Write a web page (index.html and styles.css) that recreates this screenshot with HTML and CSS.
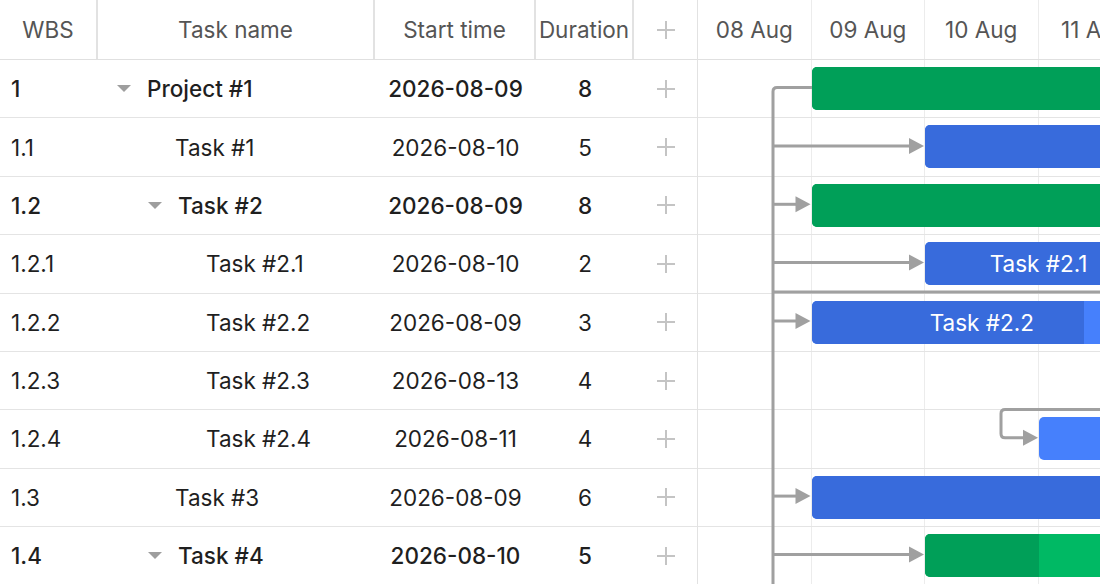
FILE: index.html
```html
<!DOCTYPE html>
<html lang="en">
<head>
<meta charset="utf-8"/>
<meta name="viewport" content="width=device-width, initial-scale=1.0"/>
<title>Gantt</title>
<link rel="stylesheet" href="styles.css">
</head>
<body>
  <div class="gantt">
    <div class="grid">
      <div class="head">
        <div class="cell c-wbs">WBS</div>
        <div class="cell c-name">Task name</div>
        <div class="cell c-start">Start time</div>
        <div class="cell c-dur">Duration</div>
        <div class="cell c-add">
          <svg class="plus" width="20" height="20" viewBox="0 0 20 20"><path d="M10 1v18M1 10h18"/></svg>
        </div>
      </div>
      <div id="gridBody"></div>
    </div>
    <div class="chart">
      <div class="scale" id="scale"></div>
      <div class="area" id="area">
        <svg class="links" width="900" height="600" viewBox="0 0 900 600">
          <g fill="none" stroke="#a0a0a0" stroke-width="3">
            <path d="M114 27.5H79Q75 27.5 75 31.5V600"/>
            <path d="M75 85.9H212"/>
            <path d="M75 144.3H98"/>
            <path d="M75 202.6H212"/>
            <path d="M75 261H98"/>
            <path d="M75 436.1H98"/>
            <path d="M75 494.5H212"/>
            <path d="M450 232H75"/>
            <path d="M450 349.5H307Q303 349.5 303 353.5V373.8Q303 377.8 307 377.8H326"/>
          </g>
          <g fill="#a0a0a0">
            <polygon points="211,77.9 226,85.9 211,93.9"/>
            <polygon points="97.5,136.3 112.5,144.3 97.5,152.3"/>
            <polygon points="211,194.6 226,202.6 211,210.6"/>
            <polygon points="97.5,253 112.5,261 97.5,269"/>
            <polygon points="325,369.8 340,377.8 325,385.8"/>
            <polygon points="97.5,428.1 112.5,436.1 97.5,444.1"/>
            <polygon points="211,486.5 226,494.5 211,502.5"/>
          </g>
        </svg>
      </div>
    </div>
  </div>
  <script>
    const dayWidth = 113.5;
    const days = ["08 Aug", "09 Aug", "10 Aug", "11 Aug", "12 Aug", "13 Aug", "14 Aug", "15 Aug", "16 Aug"];
    const tasks = [
      { wbs: "1", name: "Project #1", start: "2026-08-09", day: 1, dur: 8, level: 0, parent: true, progress: 45 },
      { wbs: "1.1", name: "Task #1", start: "2026-08-10", day: 2, dur: 5, level: 1, progress: 40 },
      { wbs: "1.2", name: "Task #2", start: "2026-08-09", day: 1, dur: 8, level: 1, parent: true, progress: 40 },
      { wbs: "1.2.1", name: "Task #2.1", start: "2026-08-10", day: 2, dur: 2, level: 2, progress: 85 },
      { wbs: "1.2.2", name: "Task #2.2", start: "2026-08-09", day: 1, dur: 3, level: 2, progress: 80 },
      { wbs: "1.2.3", name: "Task #2.3", start: "2026-08-13", day: 5, dur: 4, level: 2, progress: 30 },
      { wbs: "1.2.4", name: "Task #2.4", start: "2026-08-11", day: 3, dur: 4, level: 2, progress: 0 },
      { wbs: "1.3", name: "Task #3", start: "2026-08-09", day: 1, dur: 6, level: 1, progress: 50 },
      { wbs: "1.4", name: "Task #4", start: "2026-08-10", day: 2, dur: 5, level: 1, parent: true, progress: 20 }
    ];
    const plus = '<svg class="plus" width="20" height="20" viewBox="0 0 20 20"><path d="M10 1v18M1 10h18"/></svg>';

    const scale = document.getElementById("scale");
    days.forEach(d => {
      const cell = document.createElement("div");
      cell.className = "day";
      cell.textContent = d;
      scale.appendChild(cell);
    });

    const gridBody = document.getElementById("gridBody");
    const area = document.getElementById("area");
    const links = area.querySelector(".links");
    tasks.forEach(t => {
      const row = document.createElement("div");
      row.className = "row" + (t.parent ? " parent" : "");
      const indent = t.level * 31;
      const lead = t.parent
        ? `<span class="caret" style="margin-left:${indent}px"></span>`
        : `<span class="spacer" style="margin-left:${indent}px"></span>`;
      row.innerHTML = `
        <div class="cell c-wbs">${t.wbs}</div>
        <div class="cell c-name">${lead}<span>${t.name}</span></div>
        <div class="cell c-start">${t.start}</div>
        <div class="cell c-dur">${t.dur}</div>
        <div class="cell c-add">${plus}</div>`;
      gridBody.appendChild(row);

      const trow = document.createElement("div");
      trow.className = "trow";
      const bar = document.createElement("div");
      bar.className = "bar" + (t.parent ? " summary" : "");
      bar.style.left = (t.day * dayWidth) + "px";
      bar.style.width = (t.dur * dayWidth) + "px";
      bar.innerHTML = `<div class="progress" style="width:${t.progress}%"></div><div class="bar-label">${t.name}</div>`;
      trow.appendChild(bar);
      area.insertBefore(trow, links);
    });
  </script>
</body>
</html>
```

FILE: styles.css
```css
body {
  margin: 0;
  font-family: Inter, "Noto Sans", sans-serif;
  color: #1f1f1f;
  background: #fff;
  overflow: hidden;
}
.gantt {
  display: flex;
  height: 584px;
  overflow: hidden;
}
.grid {
  width: 698px;
  flex: none;
  border-right: 1px solid #e2e2e2;
  box-sizing: border-box;
}
.head {
  display: flex;
  height: 60px;
  border-bottom: 1px solid #e0e0e0;
  box-sizing: border-box;
  color: #555;
  font-size: 22.5px;
}
.cell {
  display: flex;
  align-items: center;
  flex: none;
  box-sizing: border-box;
  white-space: nowrap;
}
.head .cell {
  justify-content: center;
  border-right: 2px solid #e2e2e2;
}
.head .c-add {
  border-right: none;
}
.c-wbs { width: 98px; }
.c-name { width: 277px; }
.c-start { width: 161px; justify-content: center; }
.c-dur { width: 98px; justify-content: center; }
.c-add { width: 63px; justify-content: center; }
.row {
  display: flex;
  height: 58.375px;
  border-bottom: 1px solid #e4e4e4;
  box-sizing: border-box;
  font-size: 22.5px;
}
.row.parent {
  font-weight: 500;
}
.row .c-wbs {
  padding-left: 11px;
}
.row .c-name {
  padding-left: 19px;
}
.caret {
  flex: none;
  width: 30px;
  height: 7px;
  position: relative;
}
.caret::before {
  content: "";
  position: absolute;
  left: 0;
  top: 0;
  border-top: 7px solid #9e9e9e;
  border-left: 7px solid transparent;
  border-right: 7px solid transparent;
}
.spacer {
  flex: none;
  width: 27px;
}
.plus path {
  stroke: #c4c4c4;
  stroke-width: 2;
  fill: none;
}
.chart {
  flex: 1;
  overflow: hidden;
}
.scale {
  display: flex;
  height: 60px;
  border-bottom: 1px solid #e0e0e0;
  box-sizing: border-box;
}
.day {
  flex: none;
  width: 113.5px;
  border-right: 1px solid #ececec;
  box-sizing: border-box;
  display: flex;
  align-items: center;
  justify-content: center;
  font-size: 22.5px;
  color: #555;
}
.area {
  position: relative;
  width: 1021.5px;
  background: repeating-linear-gradient(to right, transparent 0 112.5px, #ececec 112.5px 113.5px);
}
.trow {
  position: relative;
  height: 58.375px;
  border-bottom: 1px solid #e4e4e4;
  box-sizing: border-box;
}
.bar {
  position: absolute;
  top: 7px;
  height: 43px;
  border-radius: 5px;
  overflow: hidden;
  background: #4680fc;
}
.bar.summary {
  background: #00b964;
}
.progress {
  position: absolute;
  left: 0;
  top: 0;
  bottom: 0;
  background: #386bdc;
}
.summary .progress {
  background: #009f58;
}
.bar-label {
  position: relative;
  display: flex;
  height: 100%;
  align-items: center;
  justify-content: center;
  color: #fff;
  font-size: 22.5px;
  white-space: nowrap;
}
.links {
  position: absolute;
  left: 0;
  top: 0;
  overflow: visible;
  pointer-events: none;
}
```
